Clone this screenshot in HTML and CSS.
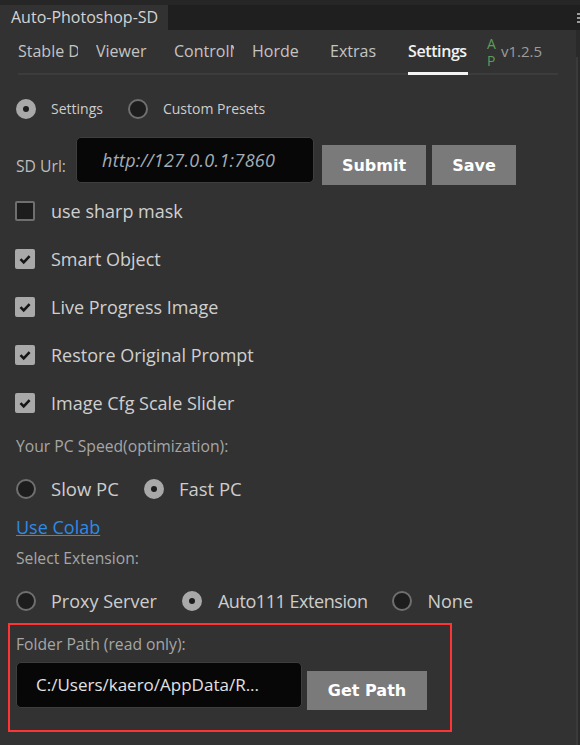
FILE: index.html
```html
<!DOCTYPE html>
<html>
<head>
<meta charset="utf-8">
<link rel="stylesheet" href="styles.css">
</head>
<body>
<div class="titlebar">
  <div class="title-tab">Auto-Photoshop-SD</div>
  <div class="menu-icon"><span></span><span></span><span></span></div>
</div>
<div class="panel">
  <div class="content">
    <div class="tabs">
      <div class="tab">Stable Diffusion</div>
      <div class="tab">Viewer</div>
      <div class="tab">ControlNet</div>
      <div class="tab">Horde</div>
      <div class="tab">Extras</div>
      <div class="tab active">Settings</div>
      <div class="ap">A P</div>
      <div class="version">v1.2.5</div>
    </div>

    <div class="row mode-row">
      <label class="opt small"><span class="radio on"></span>Settings</label>
      <label class="opt small"><span class="radio"></span>Custom Presets</label>
    </div>

    <div class="url-row">
      <span class="url-label">SD Url:</span>
      <div class="url-input">http://127.0.0.1:7860</div>
      <button class="btn btn-submit">Submit</button>
      <button class="btn btn-save">Save</button>
    </div>

    <div class="checks">
      <label class="check-row"><span class="box"></span>use sharp mask</label>
      <label class="check-row"><span class="box on"><svg viewBox="0 0 20 20" width="20" height="20"><path d="M5.5 10.2 L8.7 13.4 L14.6 7.2" fill="none" stroke="#161616" stroke-width="2.6"/></svg></span>Smart Object</label>
      <label class="check-row"><span class="box on"><svg viewBox="0 0 20 20" width="20" height="20"><path d="M5.5 10.2 L8.7 13.4 L14.6 7.2" fill="none" stroke="#161616" stroke-width="2.6"/></svg></span>Live Progress Image</label>
      <label class="check-row"><span class="box on"><svg viewBox="0 0 20 20" width="20" height="20"><path d="M5.5 10.2 L8.7 13.4 L14.6 7.2" fill="none" stroke="#161616" stroke-width="2.6"/></svg></span>Restore Original Prompt</label>
      <label class="check-row"><span class="box on"><svg viewBox="0 0 20 20" width="20" height="20"><path d="M5.5 10.2 L8.7 13.4 L14.6 7.2" fill="none" stroke="#161616" stroke-width="2.6"/></svg></span>Image Cfg Scale Slider</label>
    </div>

    <div class="caption speed-caption">Your PC Speed(optimization):</div>
    <div class="row speed-row">
      <label class="opt"><span class="radio"></span>Slow PC</label>
      <label class="opt"><span class="radio on"></span>Fast PC</label>
    </div>

    <a class="colab" href="#">Use Colab</a>

    <div class="caption ext-caption">Select Extension:</div>
    <div class="row ext-row">
      <label class="opt"><span class="radio"></span>Proxy Server</label>
      <label class="opt tight"><span class="radio on"></span>Auto111 Extension</label>
      <label class="opt"><span class="radio"></span>None</label>
    </div>

    <div class="highlight">
      <div class="caption folder-caption">Folder Path (read only):</div>
      <div class="folder-row">
        <div class="folder-input">C:/Users/kaero/AppData/R...</div>
        <button class="btn btn-path">Get Path</button>
      </div>
    </div>
  </div>
  <div class="scrollbar"><div class="thumb"></div></div>
</div>
</body>
</html>
```

FILE: styles.css
```css
* { box-sizing: border-box; }
html, body {
  margin: 0;
  padding: 0;
  width: 580px;
  height: 745px;
  overflow: hidden;
  background: #1e1e1e;
  font-family: "Open Sans", "Noto Sans", sans-serif;
  color: #cdcdcd;
}

.titlebar {
  height: 30px;
  display: flex;
  justify-content: space-between;
  align-items: flex-end;
  background: #1f1f1f;
  border-top: 5px solid #262626;
}
.title-tab {
  height: 25px;
  width: 168px;
  background: #323232;
  padding-left: 11px;
  font-size: 16px;
  line-height: 24px;
  color: #d4d4d4;
  white-space: nowrap;
}
.menu-icon {
  align-self: center;
  width: 10px;
  margin-right: -7px;
  display: flex;
  flex-direction: column;
  gap: 2px;
}
.menu-icon span {
  display: block;
  height: 2px;
  background: #9a9a9a;
}

.panel {
  height: 715px;
  background: #323232;
  display: flex;
}
.content {
  flex: 1;
  padding-left: 16px;
  display: flex;
  flex-direction: column;
  align-items: flex-start;
}
.scrollbar {
  width: 4px;
  background: #2a2a2a;
  padding-top: 27px;
}
.thumb {
  width: 2px;
  height: 100%;
  background: #3a3a3a;
}

/* tabs */
.tabs {
  margin-left: 2px;
  width: 540px;
  display: flex;
  align-items: flex-start;
  border-bottom: 2px solid #3c3c3c;
  padding-top: 10px;
}
.tab {
  width: 60px;
  margin-right: 18px;
  overflow: hidden;
  white-space: nowrap;
  font-size: 16px;
  line-height: 22px;
  padding-bottom: 10px;
  color: #c4c4c4;
}
.tab.active {
  color: #f2f2f2;
  font-weight: 600;
  letter-spacing: -0.4px;
  overflow: visible;
  border-bottom: 3px solid #f4f4f4;
  margin-bottom: -2px;
  padding-bottom: 10px;
}
.ap {
  width: 12px;
  margin-left: 1px;
  margin-top: -5px;
  font-size: 14px;
  line-height: 17px;
  color: #5a9e5a;
  word-break: break-all;
}
.version {
  margin-left: 2px;
  font-size: 15px;
  line-height: 22px;
  color: #9c9c9c;
}

/* radios */
.row { display: flex; align-items: center; gap: 25px; }
.opt {
  display: flex;
  align-items: center;
  gap: 15px;
  font-size: 18px;
  line-height: 24px;
  color: #cdcdcd;
  white-space: nowrap;
}
.opt.small { font-size: 14px; }
.opt.tight { gap: 16px; letter-spacing: -0.45px; }
.radio {
  width: 20px;
  height: 20px;
  border-radius: 50%;
  background: #1d1d1d;
  border: 2px solid #6f6f6f;
  display: flex;
  align-items: center;
  justify-content: center;
  flex-shrink: 0;
}
.radio.on {
  background: #a9a9a9;
  border-color: #a9a9a9;
}
.radio.on::after {
  content: "";
  width: 6px;
  height: 6px;
  border-radius: 50%;
  background: #1d1d1d;
}
.mode-row { margin-top: 24px; height: 24px; }
.mode-row .opt.small { line-height: 20px; padding-bottom: 4px; }

/* url */
.url-row {
  margin-top: 14px;
  display: flex;
  align-items: flex-start;
}
.url-label {
  margin-top: 19px;
  font-size: 15.7px;
  line-height: 20px;
  color: #bdbdbd;
  width: 60px;
  white-space: nowrap;
}
.url-input {
  width: 238px;
  height: 46px;
  background: #070707;
  border: 1px solid #3e3e3e;
  border-radius: 5px;
  padding-left: 25px;
  font-size: 18px;
  letter-spacing: 0.3px;
  line-height: 44px;
  font-style: italic;
  color: #a3adb6;
  white-space: nowrap;
}
.btn {
  border: none;
  background: #7a7a7a;
  color: #ffffff;
  font-family: "DejaVu Sans", "Verdana", sans-serif;
  font-weight: bold;
  font-size: 16px;
  padding: 0;
  cursor: pointer;
}
.btn-submit { margin-left: 8px; margin-top: 8px; width: 104px; height: 40px; }
.btn-save { margin-left: 6px; margin-top: 8px; width: 84px; height: 40px; }

/* checkboxes */
.checks {
  margin-top: 2px;
  display: flex;
  flex-direction: column;
}
.check-row {
  height: 48px;
  display: flex;
  align-items: center;
  gap: 16px;
  margin-left: -1px;
  font-size: 18px;
  color: #cfcfcf;
}
.box {
  width: 20px;
  height: 20px;
  border-radius: 2px;
  background: #1d1d1d;
  border: 2px solid #6f6f6f;
  display: flex;
}
.box.on {
  background: #a9a9a9;
  border: none;
}

.caption {
  font-size: 15.7px;
  line-height: 20px;
  color: #a6a6a6;
  white-space: nowrap;
}
.speed-caption { margin-top: 9px; }
.speed-row { margin-top: 21px; height: 24px; }
.speed-row .opt { font-size: 18.5px; }

.colab {
  margin-top: 14px;
  font-size: 18px;
  line-height: 24px;
  color: #2e8ae6;
  text-decoration: underline;
}
.ext-caption { margin-top: 9px; }
.ext-row { margin-top: 21px; height: 24px; }

.highlight {
  margin-top: 10px;
  margin-left: -8px;
  width: 444px;
  border: 2px solid #ff3434;
  padding: 9px 6px 20px 6px;
}
.folder-row {
  margin-top: 8px;
  display: flex;
  align-items: flex-start;
}
.folder-input {
  width: 286px;
  height: 46px;
  background: #070707;
  border: 1px solid #3e3e3e;
  border-radius: 5px;
  padding-left: 19px;
  font-size: 17px;
  line-height: 44px;
  color: #e2e2e2;
  white-space: nowrap;
}
.btn-path { margin-left: 5px; margin-top: 9px; width: 120px; height: 39px; }
```
